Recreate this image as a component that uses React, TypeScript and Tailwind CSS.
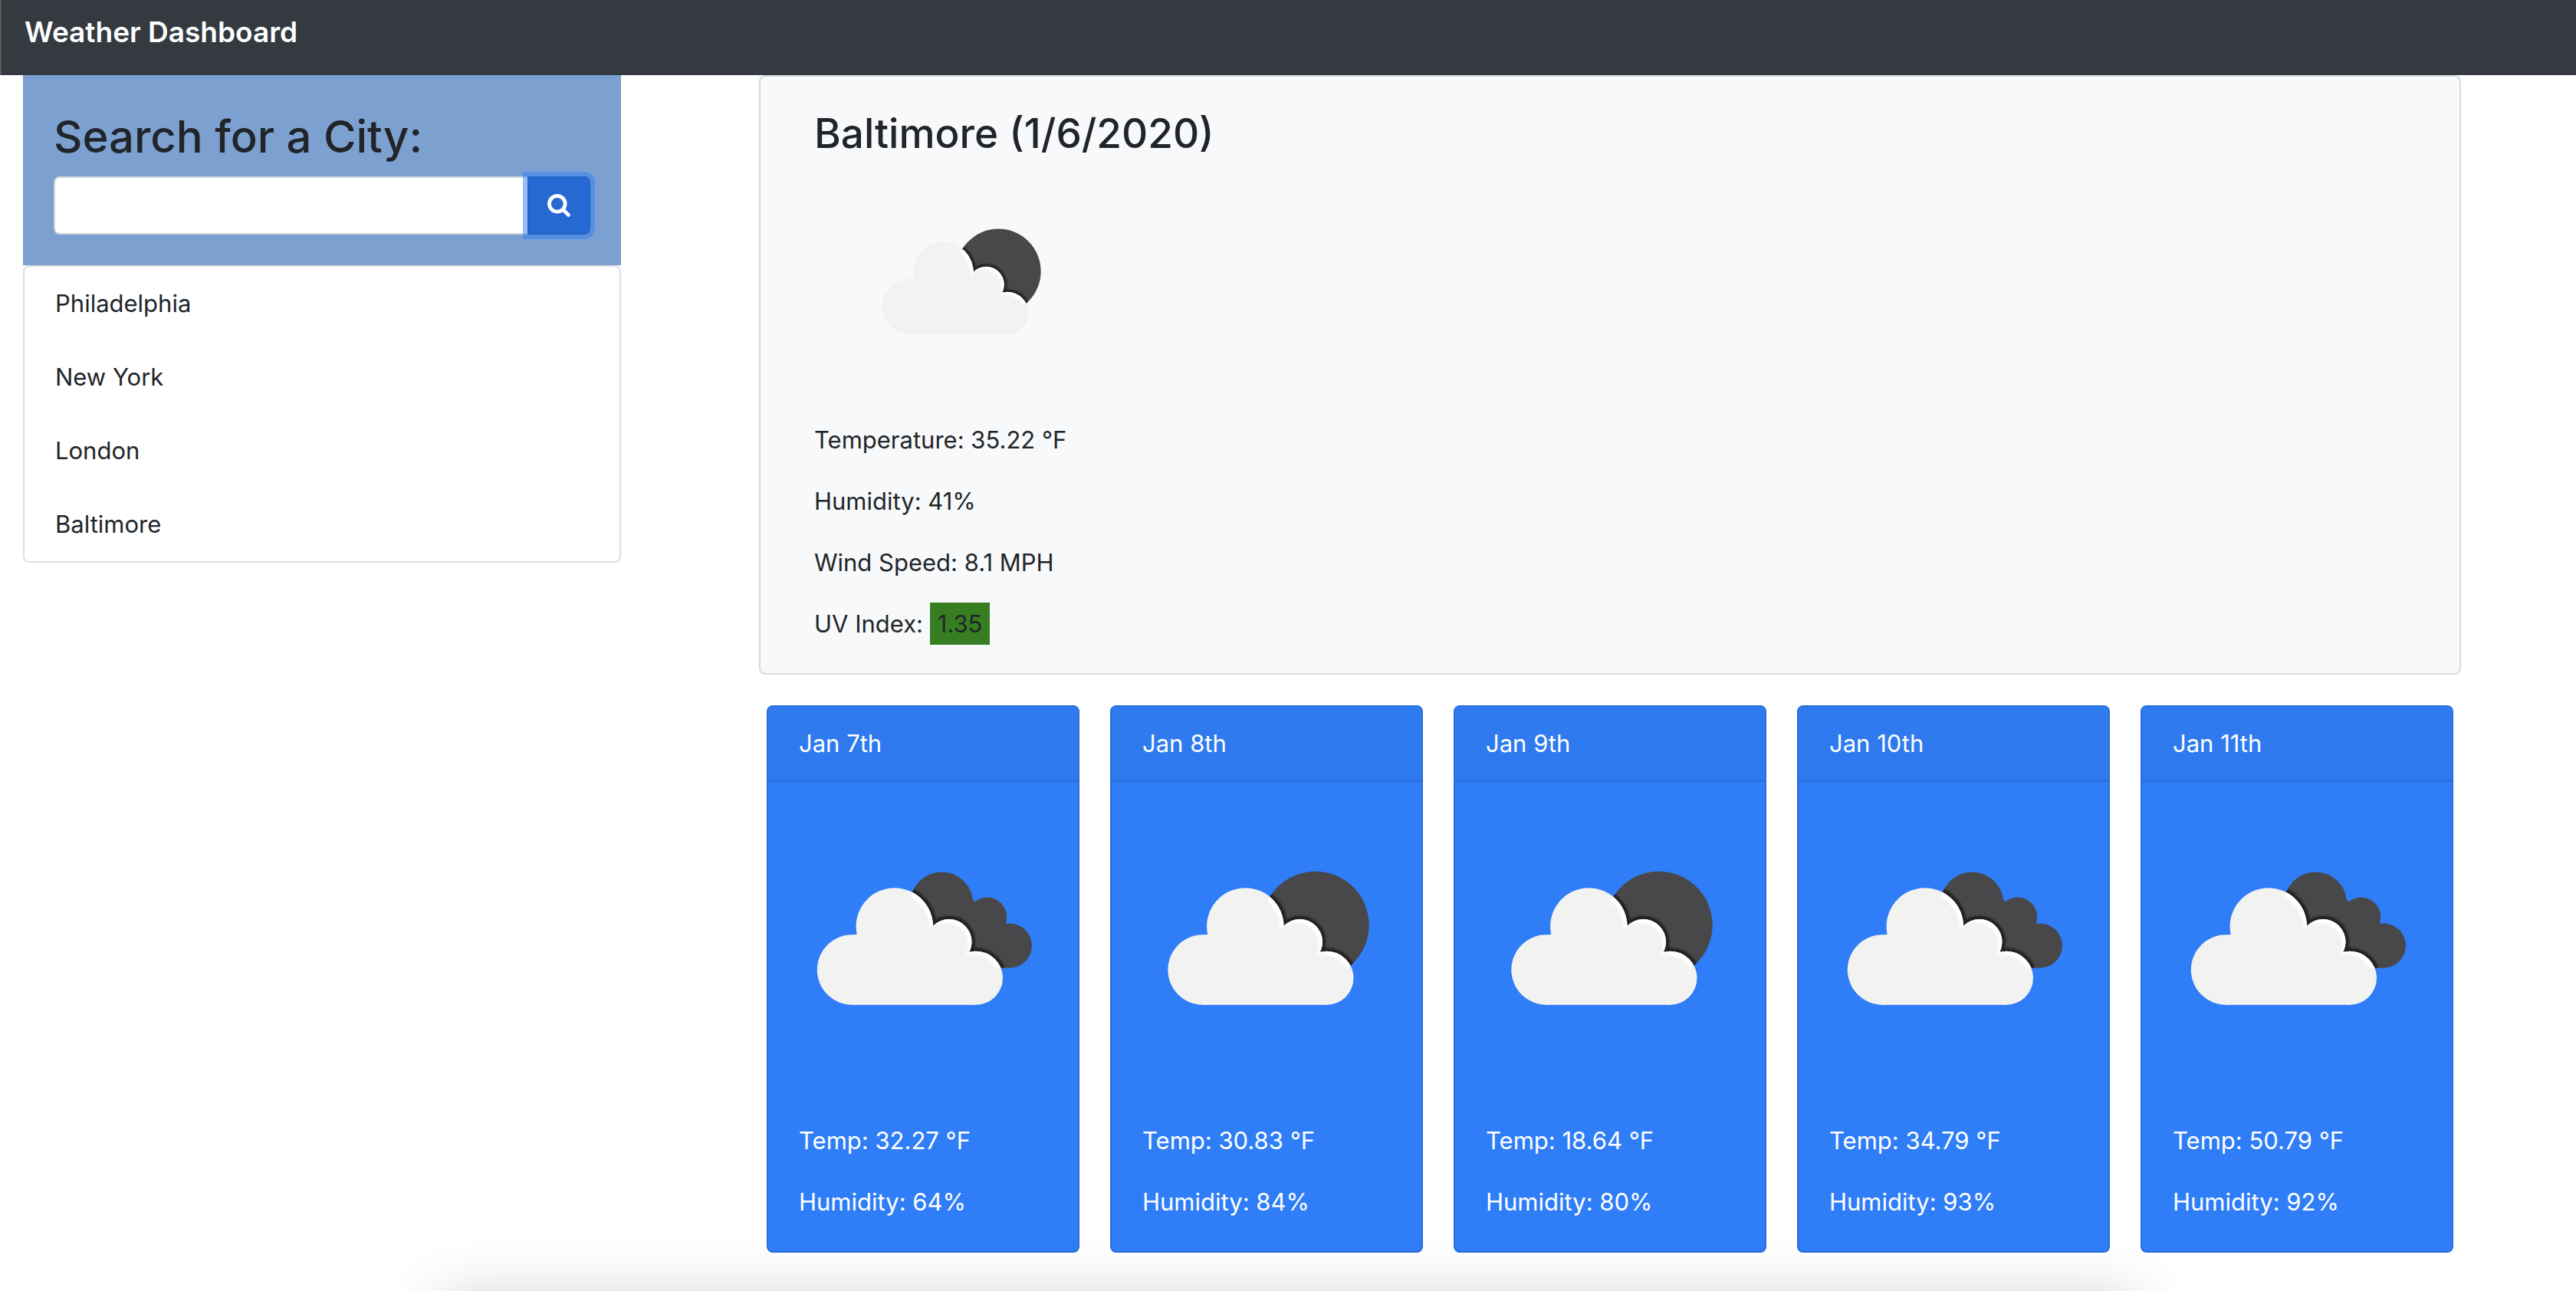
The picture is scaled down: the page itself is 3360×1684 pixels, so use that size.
import React from 'react';

type Sky = 'broken' | 'scattered';

const days: { date: string; sky: Sky; temp: string; humidity: number }[] = [
  { date: 'Jan 7th', sky: 'broken', temp: '32.27', humidity: 64 },
  { date: 'Jan 8th', sky: 'scattered', temp: '30.83', humidity: 84 },
  { date: 'Jan 9th', sky: 'scattered', temp: '18.64', humidity: 80 },
  { date: 'Jan 10th', sky: 'broken', temp: '34.79', humidity: 93 },
  { date: 'Jan 11th', sky: 'broken', temp: '50.79', humidity: 92 },
];

const cities = ['Philadelphia', 'New York', 'London', 'Baltimore'];

function FrontShape() {
  return (
    <>
      <circle cx="79" cy="205" r="45.7" />
      <circle cx="134.3" cy="148.5" r="50.2" />
      <circle cx="205.5" cy="168.5" r="29.5" />
      <circle cx="240.5" cy="215.7" r="35" />
      <path d="M79 250.7 L79 160 L134 150 L206 168 L228 184 L240.5 200 L240.5 250.7 Z" />
    </>
  );
}

function BackShape({ sky }: { sky: Sky }) {
  if (sky === 'scattered') return <circle cx="225.7" cy="146.7" r="70" />;
  return (
    <>
      <circle cx="186.3" cy="118.5" r="41" />
      <circle cx="245.7" cy="136" r="25.5" />
      <circle cx="275" cy="173.5" r="29" />
      <path d="M186 118 L228 114 L246 136 L271 145 L275 202.5 L210 202.5 Z" />
    </>
  );
}

function WeatherIcon({ sky, id, className }: { sky: Sky; id: string; className: string }) {
  const shift = sky === 'broken' ? 'translate(-9.5 0)' : undefined;
  return (
    <svg viewBox="0 0 324 324" className={className} role="img" aria-label={sky + ' clouds'}>
      <defs>
        <clipPath id={id + '-back'}>
          <BackShape sky={sky} />
        </clipPath>
        <filter id={id + '-soft'} x="-10%" y="-10%" width="120%" height="120%">
          <feGaussianBlur stdDeviation="1.3" />
        </filter>
      </defs>
      <g fill="#48484a">
        <BackShape sky={sky} />
      </g>
      <g clipPath={'url(#' + id + '-back)'}>
        <g transform={shift} fill="#232324" stroke="#232324" strokeWidth="9" filter={'url(#' + id + '-soft)'}>
          <FrontShape />
        </g>
      </g>
      <g transform={shift} fill="#f2f2f0">
        <FrontShape />
      </g>
      <g clipPath={'url(#' + id + '-back)'}>
        <g transform={shift} fill="#ffffff">
          <FrontShape />
        </g>
        <g transform={sky === 'broken' ? 'translate(-14 4.5)' : 'translate(-4.5 4.5)'} fill="#f2f2f0" filter={'url(#' + id + '-soft)'}>
          <FrontShape />
        </g>
      </g>
    </svg>
  );
}

export default function App() {
  return (
    <div className="relative min-h-screen overflow-hidden bg-white font-['Inter',sans-serif] text-[31px] leading-[48px] text-[#212529]">
      <header className="border-l-2 border-[#55595e] bg-[#343a40] px-[30px] pt-[12px] pb-[26px]">
        <h1 className="text-[37px] leading-[60px] font-semibold text-white">Weather Dashboard</h1>
      </header>

      <div className="grid grid-cols-4">
        <aside className="px-[30px]">
          <form className="bg-[#7ca0d0] p-10" onSubmit={(e) => e.preventDefault()}>
            <label htmlFor="city" className="mb-[14px] block pt-0.5 text-[58px] leading-[76px] font-medium">
              Search for a City:
            </label>
            <div className="flex">
              <input
                id="city"
                type="text"
                className="h-[76px] min-w-0 flex-1 rounded-l-lg border-2 border-[#ced4da] bg-white px-6 outline-none"
              />
              <button
                type="submit"
                aria-label="Search"
                className="relative -ml-0.5 flex h-[76px] w-[82px] items-center justify-center rounded-r-lg border-2 border-[#2463c4] bg-[#2769d3] text-white shadow-[0_0_0_6px_rgba(47,125,246,0.5)]"
              >
                <svg viewBox="0 0 30 30" className="size-[30px]" fill="none" stroke="currentColor" strokeWidth="4.8" strokeLinecap="round" aria-hidden="true">
                  <circle cx="12.8" cy="12.8" r="10.3" />
                  <path d="M20.5 20.5 L27.4 27.4" />
                </svg>
              </button>
            </div>
          </form>
          <ul className="rounded-lg border-2 border-[#dfdfdf] bg-white">
            {cities.map((city) => (
              <li key={city} className="px-10 py-6">
                {city}
              </li>
            ))}
          </ul>
        </aside>

        <main className="col-span-3 px-[150px]">
          <section className="rounded-lg border-2 border-[#d8dadc] bg-[#f8f9fa] px-[70px] py-10">
            <h2 className="text-[53px] leading-[68px] font-medium">Baltimore (1/6/2020)</h2>
            <WeatherIcon sky="scattered" id="now" className="mt-[30px] mb-14 ml-[62px] block size-[256px]" />
            <div className="flex flex-col gap-8">
              <p>Temperature: 35.22 °F</p>
              <p>Humidity: 41%</p>
              <p>Wind Speed: 8.1 MPH</p>
              <p>
                UV Index: <span className="bg-[#377e22] px-[10px] py-[9px]">1.35</span>
              </p>
            </div>
          </section>

          <div className="mt-10 grid grid-cols-5 gap-10 px-[10px] pb-[50px]">
            {days.map((day, i) => (
              <article key={day.date} className="rounded-lg border-2 border-[#296dd8] bg-[#2f7ef7] text-white">
                <h3 className="border-b-2 border-[#296dd8] bg-[#2e7aee] px-10 py-6">{day.date}</h3>
                <div className="p-10">
                  <WeatherIcon sky={day.sky} id={'day' + i} className="mb-20 block aspect-square w-full" />
                  <p className="mb-8">Temp: {day.temp} °F</p>
                  <p>Humidity: {day.humidity}%</p>
                </div>
              </article>
            ))}
          </div>
        </main>
      </div>

      <div className="pointer-events-none absolute inset-x-[575px] -bottom-[210px] h-[200px] shadow-[0_0_80px_rgba(0,0,0,0.2)]" />
    </div>
  );
}
